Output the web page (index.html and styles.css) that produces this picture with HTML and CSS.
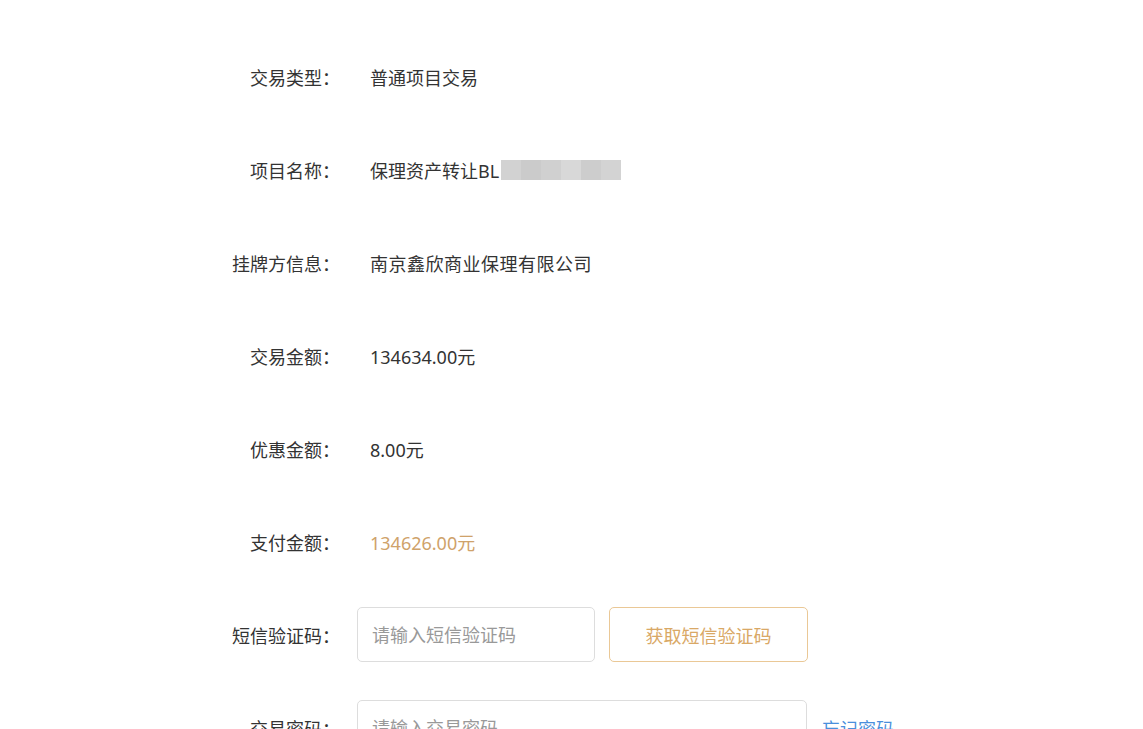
FILE: index.html
```html
<!DOCTYPE html>
<html lang="zh-CN">
<head>
  <meta charset="UTF-8">
  <meta name="viewport" content="width=device-width, initial-scale=1.0">
  <title>确认交易</title>
  <link rel="stylesheet" href="styles.css">
</head>
<body>

  <div class="trade-form">
    <div class="form-row">
      <label>交易类型：</label>
      <div class="value">普通项目交易</div>
    </div>
    <div class="form-row">
      <label>项目名称：</label>
      <div class="value">保理资产转让BL<span class="masked"><i></i><i></i><i></i><i></i><i></i><i></i></span></div>
    </div>
    <div class="form-row">
      <label>挂牌方信息：</label>
      <div class="value wide">南京鑫欣商业保理有限公司</div>
    </div>
    <div class="form-row">
      <label>交易金额：</label>
      <div class="value">134634.00元</div>
    </div>
    <div class="form-row">
      <label>优惠金额：</label>
      <div class="value">8.00元</div>
    </div>
    <div class="form-row">
      <label>支付金额：</label>
      <div class="value pay">134626.00元</div>
    </div>
    <div class="form-row">
      <label for="sms_code">短信验证码：</label>
      <input type="text" id="sms_code" class="input-short" placeholder="请输入短信验证码">
      <button type="button" class="btn-code">获取短信验证码</button>
    </div>
    <div class="form-row">
      <label for="trade_pwd">交易密码：</label>
      <input type="password" id="trade_pwd" class="input-long" placeholder="请输入交易密码">
      <a href="#" class="forget">忘记密码</a>
    </div>
  </div>

</body>
</html>
```

FILE: styles.css
```css
body {
  font-family: "Noto Sans", "Noto Sans CJK SC", sans-serif;
  margin: 0;
  padding: 0;
  background-color: #fff;
  color: #333;
}
.trade-form {
  padding: 49px 0 0 200px;
}
.form-row {
  display: flex;
  align-items: center;
  height: 55px;
  margin-bottom: 38px;
  font-size: 18px;
}
.form-row label {
  width: 140px;
  text-align: right;
  margin-right: 17px;
  flex-shrink: 0;
}
.value {
  padding-left: 13px;
  display: flex;
  align-items: center;
}
.value.wide {
  letter-spacing: 0.5px;
}
.value.pay {
  color: #cfa26a;
}
.masked {
  display: flex;
  height: 20px;
  margin-left: 2px;
}
.masked i {
  width: 20px;
  height: 20px;
  background: #d2d2d2;
}
.masked i:nth-child(2) { background: #cbcbcb; }
.masked i:nth-child(3) { background: #d0d0d0; }
.masked i:nth-child(4) { background: #d8d8d8; }
.masked i:nth-child(5) { background: #cdcdcd; }
.masked i:nth-child(6) { background: #d3d3d3; }
input {
  box-sizing: border-box;
  height: 55px;
  padding: 0 14px;
  font-family: inherit;
  font-size: 18px;
  color: #333;
  border: 1px solid #ddd;
  border-radius: 5px;
  outline: none;
}
input::placeholder {
  color: #999;
}
.input-short {
  width: 238px;
}
.input-long {
  width: 450px;
}
.btn-code {
  box-sizing: border-box;
  width: 199px;
  height: 55px;
  margin-left: 14px;
  background: #fff;
  border: 1px solid #eac896;
  border-radius: 5px;
  color: #d9a866;
  font-family: inherit;
  font-size: 18px;
  cursor: pointer;
}
.forget {
  margin-left: 15px;
  color: #4a8fdc;
  text-decoration: none;
  font-size: 18px;
}
```
